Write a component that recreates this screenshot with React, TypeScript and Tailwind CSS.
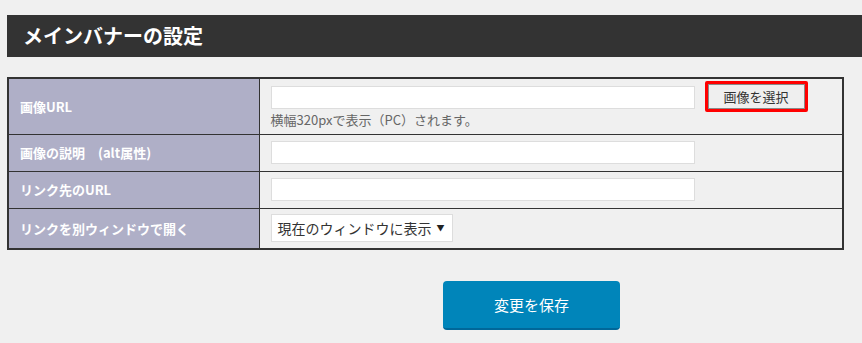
import React from "react";

export default function App() {
  const font = { fontFamily: '"Noto Sans CJK JP", "Noto Sans", sans-serif' };
  return (
    <div className="w-[862px] h-[343px] bg-[#f0f0f0] overflow-hidden" style={font}>
      <div className="pt-[15px] pl-[7px]">
        <div className="h-[42px] bg-[#333333] flex items-center pl-[16px]">
          <h1 className="text-white text-[20px] font-bold leading-none">メインバナーの設定</h1>
        </div>
      </div>
      <div className="pt-[20px] pl-[7px]">
        <table className="w-[837px] border-collapse border-2 border-[#333] text-[13px]">
          <tbody>
            <tr className="h-[56px]">
              <th className="w-[251px] bg-[#afafc7] border border-[#333] text-left align-middle pl-[11px] text-white font-bold">画像URL</th>
              <td className="border border-[#333] align-top pl-[11px]">
                <div className="flex items-start">
                  <div className="flex flex-col">
                    <input className="mt-[7px] w-[424px] h-[23px] bg-white border border-[#dddddd] outline-none" />
                    <span className="mt-[2px] text-[13px] text-[#666] leading-[18px]">横幅320pxで表示（PC）されます。</span>
                  </div>
                  <div className="ml-[10px] mt-[2px] border-[3px] border-[#ff0000] rounded-[2px]">
                    <button className="w-[97px] h-[25px] bg-[#efefef] border border-[#8a8a8a] text-[13px] text-[#333] leading-none">画像を選択</button>
                  </div>
                </div>
              </td>
            </tr>
            <tr className="h-[37px]">
              <th className="bg-[#afafc7] border border-[#333] text-left align-middle pl-[11px] text-white font-bold">
                画像の説明　(alt属性)
              </th>
              <td className="border border-[#333] align-middle pl-[11px]">
                <input className="block w-[424px] h-[23px] bg-white border border-[#dddddd] outline-none" />
              </td>
            </tr>
            <tr className="h-[37px]">
              <th className="bg-[#afafc7] border border-[#333] text-left align-middle pl-[11px] text-white font-bold">リンク先のURL</th>
              <td className="border border-[#333] align-middle pl-[11px]">
                <input className="block w-[424px] h-[23px] bg-white border border-[#dddddd] outline-none" />
              </td>
            </tr>
            <tr className="h-[41px]">
              <th className="bg-[#afafc7] border border-[#333] text-left align-middle pl-[11px] text-white font-bold">リンクを別ウィンドウで開く</th>
              <td className="border border-[#333] align-middle pl-[11px]">
                <div className="w-[182px] h-[28px] bg-white border border-[#dddddd] flex items-center pl-[6px] pr-[7px] justify-between">
                  <span className="text-[14px] text-[#333] leading-none">現在のウィンドウに表示</span>
                  <span className="text-[8px] text-[#222] leading-none">▼</span>
                </div>
              </td>
            </tr>
          </tbody>
        </table>
      </div>
      <div className="pt-[31px] pl-[443px]">
        <button className="w-[177px] h-[49px] bg-[#0085ba] border-b-2 border-[#006799] rounded-[4px] text-white text-[15px] leading-none">変更を保存</button>
      </div>
    </div>
  );
}
